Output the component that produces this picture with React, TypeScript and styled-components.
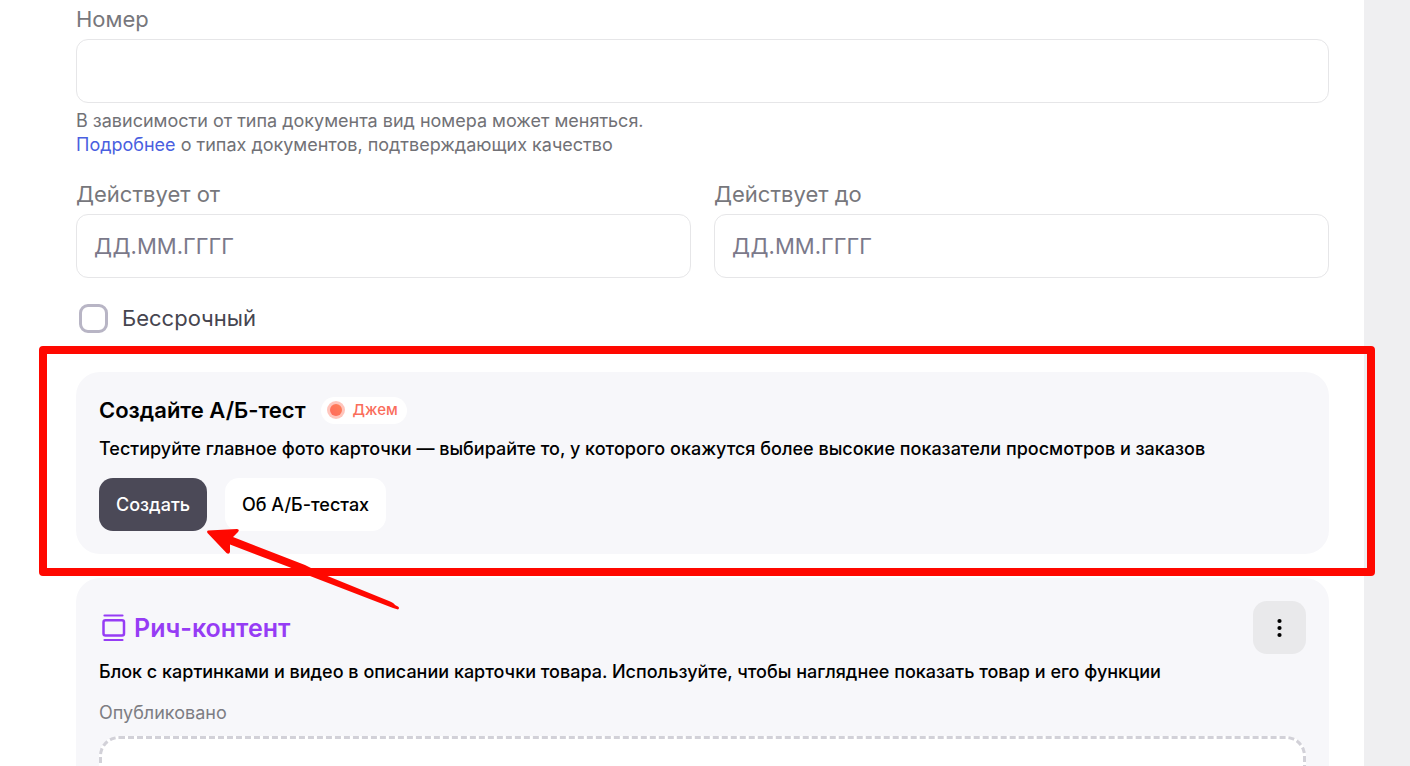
import React from "react";
import styled, { createGlobalStyle } from "styled-components";

const GlobalStyle = createGlobalStyle`
  *, *::before, *::after { box-sizing: border-box; }
  body {
    margin: 0;
    background: #efeff1;
    color: #000;
    font-family: Inter, "Liberation Sans", sans-serif;
    font-size: 18px;
    font-weight: 400;
    line-height: 24px;
  }
  button, input { font: inherit; }
`;

const Page = styled.div`
  height: 100vh;
  overflow: hidden;
  padding-right: 46px;
`;

const Panel = styled.main`
  padding: 4px 35px 24px 76px;
  background: #fff;
`;

const Form = styled.form`
  display: flex;
  flex-direction: column;
  gap: 22px;
  margin-bottom: 36px;
`;

const Row = styled.div`
  display: flex;
  gap: 23px;
`;

const Field = styled.div`
  display: flex;
  flex: 1;
  flex-direction: column;
  min-width: 0;
`;

const Label = styled.label`
  margin-bottom: 5px;
  color: #77777c;
  font-size: 22px;
  line-height: 30px;
`;

const TextInput = styled.input`
  width: 100%;
  height: 64px;
  padding: 0 17px;
  border: 1px solid #e6e6e8;
  border-radius: 12px;
  background: #fff;
  color: #46454f;
  font-size: 22px;
  outline: none;

  &::placeholder {
    color: #7b798a;
    opacity: 1;
  }
`;

const Hint = styled.p`
  margin: 6px 0 0;
  color: #717176;
`;

const HintLink = styled.a`
  color: #4a5fe0;
  text-decoration: none;
`;

const CheckLabel = styled.label`
  display: flex;
  align-items: center;
  gap: 14px;
  padding-left: 3px;
  color: #46454f;
  font-size: 22px;
  line-height: 36px;
`;

const Checkbox = styled.input`
  width: 29px;
  height: 29px;
  margin: 0;
  appearance: none;
  border: 3px solid #b8b5c5;
  border-radius: 9px;
  background: #fff;

  &:checked { background: #4b4957; }
`;

const Card = styled.section`
  position: relative;
  margin-bottom: 24px;
  padding: 23px;
  border-radius: 24px;
  background: #f7f7fa;
`;

const CardHead = styled.div<{ $spread?: boolean }>`
  display: flex;
  align-items: center;
  justify-content: ${(p) => (p.$spread ? "space-between" : "flex-start")};
  gap: 15px;
  margin-bottom: ${(p) => (p.$spread ? 6 : 12)}px;
`;

const Title = styled.h2<{ $accent?: boolean }>`
  display: flex;
  align-items: center;
  gap: 7px;
  margin: 0;
  color: ${(p) => (p.$accent ? "#963cf5" : "#000")};
  font-size: ${(p) => (p.$accent ? 25 : 22)}px;
  font-weight: 600;
  line-height: 30px;
`;

const Badge = styled.span`
  display: flex;
  align-items: center;
  gap: 8px;
  height: 27px;
  padding: 0 9px 0 6px;
  border-radius: 14px;
  background: #fff;
  color: #fa6d5b;
  font-size: 15px;
  font-weight: 500;
`;

const Description = styled.p`
  margin: 0 0 17px;
  font-weight: 500;
`;

const Actions = styled.div`
  display: flex;
  gap: 18px;
`;

const Button = styled.button<{ $primary?: boolean }>`
  height: 53px;
  padding: 0 17px;
  border: 0;
  border-radius: 14px;
  background: ${(p) => (p.$primary ? "#4b4957" : "#fff")};
  color: ${(p) => (p.$primary ? "#fff" : "#000")};
  font-weight: 500;
`;

const MenuButton = styled.button`
  display: flex;
  align-items: center;
  justify-content: center;
  width: 53px;
  height: 53px;
  padding: 0;
  border: 0;
  border-radius: 14px;
  background: #e9e9eb;
`;

const Status = styled.p`
  margin: 0 0 11px;
  color: #7d7d83;
`;

const Preview = styled.div`
  height: 240px;
  border: 3px dashed #d2d1d8;
  border-radius: 20px;
  background: #fff;
`;

const Highlight = styled.div`
  position: absolute;
  z-index: 1;
  top: -26px;
  right: -46px;
  bottom: -22px;
  left: -37px;
  border: 8px solid #ff0800;
  border-radius: 4px;
  pointer-events: none;
`;

const Pointer = styled.svg`
  position: absolute;
  z-index: 2;
  top: 143px;
  left: 119px;
  pointer-events: none;
`;

export default function App() {
  return (
    <>
      <GlobalStyle />
      <Page>
        <Panel>
          <Form>
            <Field>
              <Label htmlFor="number">Номер</Label>
              <TextInput id="number" type="text" />
              <Hint>
                В зависимости от типа документа вид номера может меняться.
                <br />
                <HintLink href="#types">Подробнее</HintLink> о типах документов,
                подтверждающих качество
              </Hint>
            </Field>
            <Row>
              <Field>
                <Label htmlFor="from">Действует от</Label>
                <TextInput id="from" type="text" placeholder="ДД.ММ.ГГГГ" />
              </Field>
              <Field>
                <Label htmlFor="to">Действует до</Label>
                <TextInput id="to" type="text" placeholder="ДД.ММ.ГГГГ" />
              </Field>
            </Row>
            <CheckLabel htmlFor="unlimited">
              <Checkbox id="unlimited" type="checkbox" />
              Бессрочный
            </CheckLabel>
          </Form>

          <Card>
            <CardHead>
              <Title>Создайте А/Б-тест</Title>
              <Badge>
                <svg width="18" height="18" viewBox="0 0 18 18" aria-hidden="true">
                  <defs>
                    <linearGradient id="jam" x1="0" y1="1" x2="1" y2="0">
                      <stop offset="0" stopColor="#ff6a5c" />
                      <stop offset="1" stopColor="#ff8058" />
                    </linearGradient>
                  </defs>
                  <circle cx="9" cy="9" r="9" fill="#ffc5bc" />
                  <circle cx="9" cy="9" r="6" fill="url(#jam)" />
                </svg>
                Джем
              </Badge>
            </CardHead>
            <Description>
              Тестируйте главное фото карточки — выбирайте то, у которого окажутся
              более высокие показатели просмотров и заказов
            </Description>
            <Actions>
              <Button type="button" $primary>
                Создать
              </Button>
              <Button type="button">Об А/Б-тестах</Button>
            </Actions>
            <Highlight />
            <Pointer width="220" height="105" viewBox="0 0 220 105" aria-hidden="true">
              <path
                d="M13 15.5 L42 14 Q45 14.5 43 17 L38 22 L110 50 L130 60 L194 86 Q199 88 200 90 L203 91.5 Q205 93 203 94.5 L198 93 L115 61 L94 52 L35 29.5 L35 37 Q34 40 31.5 38 L12.5 18 Q11.5 16 13 15.5 Z"
                fill="#ff0800"
              />
            </Pointer>
          </Card>

          <Card>
            <CardHead $spread>
              <Title $accent>
                <svg
                  width="28"
                  height="28"
                  viewBox="0 0 28 28"
                  fill="none"
                  stroke="currentColor"
                  strokeWidth="2.5"
                  strokeLinecap="round"
                  aria-hidden="true"
                >
                  <path d="M5.5 1.5H23.5M5.5 26H23.5" strokeWidth="2.2" />
                  <rect x="4.5" y="6.2" width="20.5" height="15.3" rx="2" />
                </svg>
                Рич-контент
              </Title>
              <MenuButton type="button" aria-label="Меню">
                <svg width="6" height="20" viewBox="0 0 6 20" aria-hidden="true">
                  <circle cx="2.5" cy="3" r="2.1" />
                  <circle cx="2.5" cy="10" r="2.1" />
                  <circle cx="2.5" cy="17" r="2.1" />
                </svg>
              </MenuButton>
            </CardHead>
            <Description>
              Блок с картинками и видео в описании карточки товара. Используйте, чтобы
              нагляднее показать товар и его функции
            </Description>
            <Status>Опубликовано</Status>
            <Preview />
          </Card>
        </Panel>
      </Page>
    </>
  );
}
